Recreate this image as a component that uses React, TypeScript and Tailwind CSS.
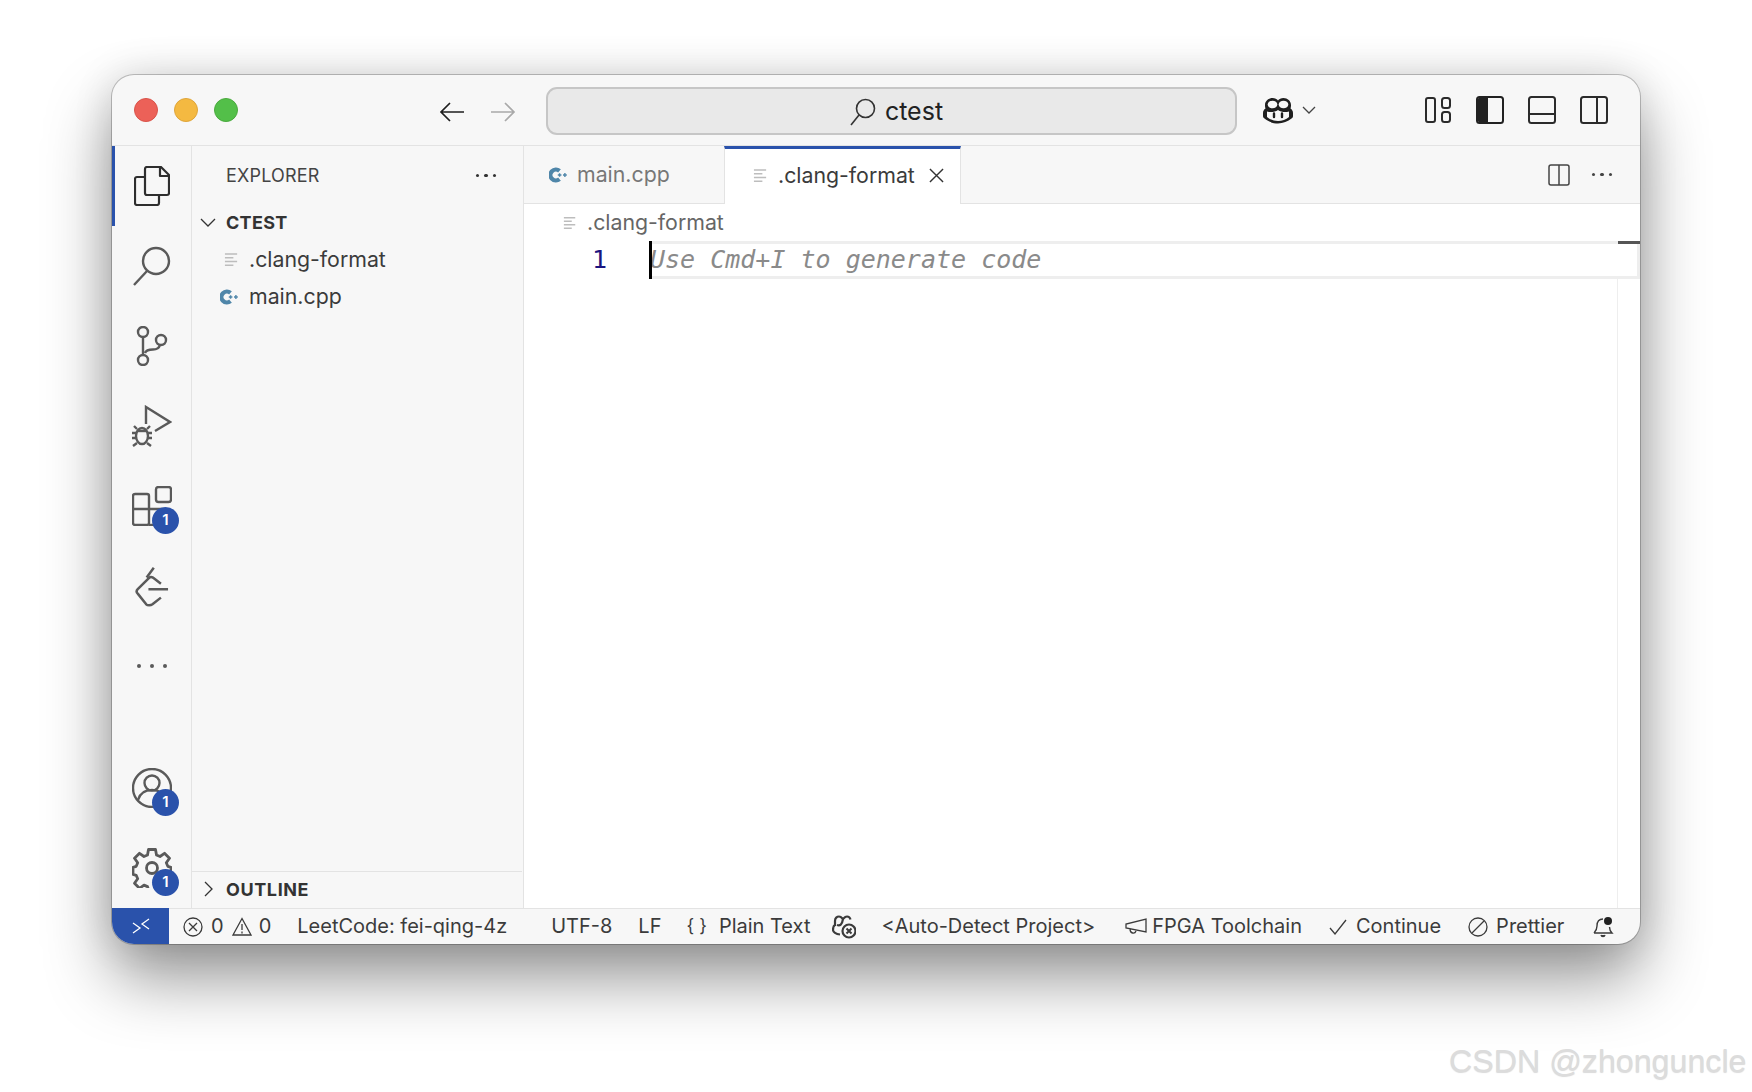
import React from 'react';

function FileLines({ className }: { className?: string }) {
  return (
    <svg viewBox="0 0 16 16" className={className} fill="none" stroke="#bdbdbd" strokeWidth="1.600">
      <path d="M1 2h13M1 6h9M1 10h13M1 14h9" />
    </svg>
  );
}

function CppIcon({ className }: { className?: string }) {
  return (
    <svg viewBox="0 0 18 16" className={className} fill="none" stroke="#4f86a9">
      <path d="M10.500 3.800A5.500 5.500 0 1 0 10.500 12.200" strokeWidth="4.200" />
      <path d="M8.800 8h3.600M10.600 6.200v3.600M14 8h3.800M15.900 6.100v3.800" strokeWidth="1.400" />
    </svg>
  );
}

function Badge({ className }: { className: string }) {
  return (
    <div className={`absolute flex h-[27px] w-[27px] items-center justify-center rounded-full bg-[#2a52ab] text-[15px] font-semibold text-white ${className}`}>
      1
    </div>
  );
}

function ActivityItem({ children, active }: { children: React.ReactNode; active?: boolean }) {
  return (
    <div className={`relative flex h-20 w-full items-center justify-center ${active ? 'border-l-[3px] border-[#2a52ab] pr-[3px]' : ''}`}>
      {children}
    </div>
  );
}

function CopilotIcon({ className }: { className?: string }) {
  return (
    <svg viewBox="0 0 32 27" className={className}>
      <path d="M1 16c0-2 1-3.500 2.500-4.500C3 10 3 9 3 8c0-4 3.500-7 7.500-7 2.500 0 4.500 1 5.500 2.500C17 2 19 1 21.500 1 25.500 1 29 4 29 8c0 1 0 2-.5 3.500C30 12.500 31 14 31 16v3c0 1-.5 2-1.500 2.600C26 24.600 21 26.500 16 26.500S6 24.600 2.500 21.600C1.500 21 1 20 1 19z" fill="#1f1f1f" />
      <ellipse cx="10.500" cy="7.500" rx="4.800" ry="3.800" fill="#f7f7f7" />
      <ellipse cx="21.500" cy="7.500" rx="4.800" ry="3.800" fill="#f7f7f7" />
      <path d="M5 14.500c4 1.200 8 .5 11-1.500 3 2 7 2.700 11 1.500V20c-3 2.500-7 4-11 4s-8-1.500-11-4z" fill="#f7f7f7" />
      <path d="M12 16.500v3.500M20 16.500v3.500" stroke="#1f1f1f" strokeWidth="2.400" strokeLinecap="round" />
    </svg>
  );
}

function CopilotSmall() {
  return (
    <g fill="none" stroke="#3b3b3b" strokeWidth="2.200">
      <path d="M3 11V6c0-3 2-4.500 4-4.500S10 3 11 4c1-1 2-2.500 4-2.500s3 1 3.500 3" />
      <path d="M3 10c-2 1-2 3-2 5 0 2 3 4 7 4.500" />
      <path d="M5 10c3 1 5 0 6-6" />
      <circle cx="17" cy="16" r="6.500" fill="#f7f7f7" />
      <path d="M14.500 13.500l5 5M19.500 13.500l-5 5" strokeWidth="2" />
    </g>
  );
}

function Dots({ dot, gap }: { dot: string; gap: string }) {
  return (
    <div className={`flex ${gap}`}>
      <div className={`rounded-full ${dot}`} />
      <div className={`rounded-full ${dot}`} />
      <div className={`rounded-full ${dot}`} />
    </div>
  );
}

function StatusText({ children, className = '' }: { children: React.ReactNode; className?: string }) {
  return <span className={`-mt-[2px] whitespace-nowrap ${className}`}>{children}</span>;
}

export default function App() {
  return (
    <div className="relative h-[1092px] w-[1752px] overflow-hidden bg-white pl-[112px] pt-[75px] font-['Inter','Liberation_Sans',sans-serif] text-[#3b3b3b]">
      {/* Window */}
      <div className="flex h-[869px] w-[1528px] flex-col overflow-hidden rounded-[22px] bg-[#f7f7f7] shadow-[0_0_0_1px_rgba(0,0,0,0.22),0_34px_66px_rgba(0,0,0,0.42),0_0_40px_rgba(0,0,0,0.12)]">
        {/* Title bar */}
        <header className="flex h-[71px] shrink-0 items-center border-b border-[#e3e3e3] pl-[22px] pr-[32px]">
          <div className="flex gap-4">
            <div className="h-6 w-6 rounded-full border border-[#d9534a] bg-[#ec6158]" />
            <div className="h-6 w-6 rounded-full border border-[#dfa53a] bg-[#f4b941]" />
            <div className="h-6 w-6 rounded-full border border-[#4aaa3e] bg-[#53bf49]" />
          </div>
          <svg viewBox="0 0 26 22" className="ml-[201px] mt-[3px] h-[22px] w-[26px]" fill="none" stroke="#1f1f1f" strokeWidth="1.700">
            <path d="M25 11H2M11 2l-9 9 9 9" />
          </svg>
          <svg viewBox="0 0 26 22" className="ml-[25px] mt-[3px] h-[22px] w-[26px]" fill="none" stroke="#a9a9a9" strokeWidth="1.700">
            <path d="M1 11h23M15 2l9 9-9 9" />
          </svg>
          <div className="ml-[30px] mt-px flex h-[48px] w-[691px] items-center justify-center rounded-[11px] border-2 border-[#c6c6c6] bg-[#e9e9e9] pl-[10px] pt-[2px]">
            <svg viewBox="0 0 26 28" className="h-[28px] w-[26px]" fill="none" stroke="#333333" strokeWidth="1.600">
              <circle cx="15.500" cy="10.500" r="9" />
              <path d="M9 17 1 27" />
            </svg>
            <span className="ml-[9px] text-[25px] leading-none text-[#222222]">ctest</span>
          </div>
          <CopilotIcon className="ml-[25px] h-[27px] w-[32px]" />
          <svg viewBox="0 0 14 8" className="ml-[8px] h-[8px] w-[14px]" fill="none" stroke="#444444" strokeWidth="1.300">
            <path d="M1 1l6 6 6-6" />
          </svg>
          <div className="ml-auto flex items-center gap-[24px]">
            <svg viewBox="0 0 28 26" className="h-[26px] w-[28px]" fill="none" stroke="#2b2b2b" strokeWidth="2">
              <rect x="2" y="1" width="9" height="24" rx="2" />
              <rect x="18" y="1" width="8" height="10" rx="2.500" />
              <rect x="18" y="15" width="8" height="10" rx="2.500" />
            </svg>
            <svg viewBox="0 0 28 28" className="h-[28px] w-[28px]">
              <rect x="1" y="1" width="26" height="26" rx="2.500" fill="none" stroke="#222222" strokeWidth="2" />
              <path d="M2 3a1 1 0 0 1 1-1h9v24H3a1 1 0 0 1-1-1z" fill="#222222" />
            </svg>
            <svg viewBox="0 0 28 28" className="h-[28px] w-[28px]" fill="none" stroke="#2b2b2b" strokeWidth="2">
              <rect x="1" y="1" width="26" height="26" rx="2.500" />
              <path d="M1 18h26" />
            </svg>
            <svg viewBox="0 0 28 28" className="h-[28px] w-[28px]" fill="none" stroke="#2b2b2b" strokeWidth="2">
              <rect x="1" y="1" width="26" height="26" rx="2.500" />
              <path d="M17 1v26" />
            </svg>
          </div>
        </header>

        {/* Body */}
        <div className="flex min-h-0 flex-1">
          {/* Activity bar */}
          <nav className="flex w-20 shrink-0 flex-col border-r border-[#e3e3e3]">
            <ActivityItem active>
              <svg viewBox="0 0 36 40" className="h-[40px] w-[36px]" fill="none" stroke="#2e2e2e" strokeWidth="2.200" strokeLinejoin="round">
                <path d="M11 3a2 2 0 0 1 2-2h14l8 8v18a2 2 0 0 1-2 2H13a2 2 0 0 1-2-2z" />
                <path d="M26 1v9h9" />
                <path d="M11 11H3a2 2 0 0 0-2 2v24a2 2 0 0 0 2 2h20a2 2 0 0 0 2-2v-8" />
              </svg>
            </ActivityItem>
            <ActivityItem>
              <svg viewBox="0 0 38 40" className="h-[40px] w-[38px]" fill="none" stroke="#5a5a5a" strokeWidth="2.400">
                <circle cx="23" cy="15" r="13" />
                <path d="M14 25 1 39" />
              </svg>
            </ActivityItem>
            <ActivityItem>
              <svg viewBox="0 0 32 40" className="h-[40px] w-[32px]" fill="none" stroke="#5a5a5a" strokeWidth="2.400">
                <circle cx="7" cy="6" r="5" />
                <circle cx="7" cy="34" r="5" />
                <circle cx="25" cy="14" r="5" />
                <path d="M7 11v18M9 27c1-3 4-3.500 8-3.500 3 0 6-1 7-4.500" />
              </svg>
            </ActivityItem>
            <ActivityItem>
              <svg viewBox="0 0 40 42" className="h-[42px] w-[40px]" fill="none" stroke="#5a5a5a" strokeWidth="2.400">
                <path d="M14 19V2l24 15-15 9" />
                <ellipse cx="10" cy="31" rx="6" ry="8" />
                <path d="M4 28H0M16 28h4M5 38l-4 3M15 38l4 3M4 33H0M16 33h4M5 24l-3-3M15 24l3-3" />
                <path d="M6 26h8" />
              </svg>
            </ActivityItem>
            <ActivityItem>
              <svg viewBox="0 0 40 40" className="h-[40px] w-[40px]" fill="none" stroke="#5a5a5a" strokeWidth="2.400">
                <rect x="1" y="8" width="16" height="31" rx="2" />
                <path d="M1 23h31v14a2 2 0 0 1-2 2H17" />
                <rect x="24" y="1" width="15" height="15" rx="2.500" />
              </svg>
              <Badge className="left-[40px] top-[41px]" />
            </ActivityItem>
            <ActivityItem>
              <svg viewBox="0 0 38 46" className="h-[41px] w-[34px]" fill="none" stroke="#5a5a5a" strokeWidth="2.800" strokeLinejoin="round">
                <path d="M15 26h22M21 2 13 13" />
                <path d="M29 20l-9-7c-1.500-1-3-1-4.500.5L3 26c-1.500 1.500-1.500 3.500 0 5l9.500 12c1.500 1.500 5 1.500 7 0l9.500-7.500" />
              </svg>
            </ActivityItem>
            <ActivityItem>
              <Dots dot="h-[4px] w-[4px] bg-[#5a5a5a]" gap="gap-[9px]" />
            </ActivityItem>
            <div className="flex-1" />
            <ActivityItem>
              <svg viewBox="0 0 40 40" className="h-[40px] w-[40px]" fill="none" stroke="#5a5a5a" strokeWidth="2.400">
                <circle cx="20" cy="20" r="19" />
                <circle cx="20" cy="15" r="7.500" />
                <path d="M6 32c2-7 7-10 14-10s12 3 14 10" />
              </svg>
              <Badge className="left-[40px] top-[41px]" />
            </ActivityItem>
            <ActivityItem>
              <svg viewBox="0 0 40 40" className="h-[40px] w-[40px]" fill="none" stroke="#5a5a5a" strokeWidth="2.800" strokeLinejoin="round">
                <path d="M16.500 1.500h7l1 5.500 3.500 1.500 4.500-3.200 5 5-3.200 4.500 1.500 3.500 3.200 1v7l-3.200 1-1.500 3.500 3.200 4.500-5 5-4.500-3.200-3.500 1.500-1 3.200h-7l-1-3.200-3.500-1.500-4.500 3.200-5-5 3.200-4.500-1.500-3.500-3.200-1v-7l3.200-1 1.500-3.500-3.200-4.500 5-5 4.500 3.200 3.500-1.500z" />
                <circle cx="20" cy="20" r="5.500" />
              </svg>
              <Badge className="left-[40px] top-[41px]" />
            </ActivityItem>
          </nav>

          {/* Explorer */}
          <aside className="flex w-[332px] shrink-0 flex-col border-r border-[#e3e3e3]">
            <div className="flex h-[58px] shrink-0 items-center justify-between pl-[34px] pr-[27px] pt-[1px] text-[18px] tracking-[0.2px] text-[#444444]">
              <span>EXPLORER</span>
              <Dots dot="h-[3.500px] w-[3.500px] bg-[#333333]" gap="gap-[5px]" />
            </div>
            <div className="flex h-[37px] items-center pl-[8px] text-[18px] font-bold tracking-[0.3px] text-[#333333]">
              <svg viewBox="0 0 16 10" className="h-[10px] w-[16px]" fill="none" stroke="#333333" strokeWidth="1.300">
                <path d="M1 1l7 7 7-7" />
              </svg>
              <span className="ml-[10px]">CTEST</span>
            </div>
            <div className="flex h-[37px] items-center pl-[32px] text-[21.3px] text-[#3b3b3b]">
              <FileLines className="h-[15px] w-[15px]" />
              <span className="ml-[10px]">.clang-format</span>
            </div>
            <div className="flex h-[37px] items-center pl-[28px] text-[21.3px] text-[#3b3b3b]">
              <CppIcon className="h-[16px] w-[18px]" />
              <span className="ml-[11px]">main.cpp</span>
            </div>
            <div className="flex-1" />
            <div className="mr-[1px] flex h-[37px] shrink-0 items-center border-t border-[#e3e3e3] pb-[2px] pl-[12px] text-[18px] font-bold tracking-[0.6px] text-[#333333]">
              <svg viewBox="0 0 10 16" className="h-[16px] w-[10px]" fill="none" stroke="#333333" strokeWidth="1.300">
                <path d="M1 1l7 7-7 7" />
              </svg>
              <span className="ml-[12px]">OUTLINE</span>
            </div>
          </aside>

          {/* Editor */}
          <main className="flex min-w-0 flex-1 flex-col bg-white">
            <div className="flex h-[58px] shrink-0 items-stretch border-b border-[#e3e3e3] bg-[#f7f7f7]">
              <div className="flex w-[200px] shrink-0 items-center pl-[25px] text-[21.3px] text-[#777777]">
                <CppIcon className="h-[16px] w-[18px]" />
                <span className="ml-[10px]">main.cpp</span>
              </div>
              <div className="-mb-px flex w-[237px] shrink-0 items-center whitespace-nowrap border-x border-t-[3px] border-x-[#e3e3e3] border-t-[#2a52ab] bg-white pb-[2px] pl-[28px] text-[21.3px] text-[#3b3b3b]">
                <FileLines className="h-[15px] w-[15px]" />
                <span className="ml-[10px]">.clang-format</span>
                <svg viewBox="0 0 16 16" className="ml-[14px] h-[15px] w-[15px]" fill="none" stroke="#333333" strokeWidth="1.500">
                  <path d="M1 1l14 14M15 1 1 15" />
                </svg>
              </div>
              <div className="ml-auto flex items-center pr-[28px]">
                <svg viewBox="0 0 22 22" className="-ml-px h-[22px] w-[22px]" fill="none" stroke="#444444" strokeWidth="1.500">
                  <rect x="1" y="1" width="20" height="20" rx="2" />
                  <path d="M11 1v20" />
                </svg>
                <div className="ml-[22px]">
                  <Dots dot="h-[3.500px] w-[3.500px] bg-[#444444]" gap="gap-[5px]" />
                </div>
              </div>
            </div>
            <div className="flex h-[37px] shrink-0 items-center pl-[39px] text-[21.3px] text-[#666666]">
              <FileLines className="h-[14px] w-[14px]" />
              <span className="ml-[10px]">.clang-format</span>
            </div>
            <div className="flex h-[38px] shrink-0 items-center">
              <span className="ml-[68px] w-[57px] font-['DejaVu_Sans_Mono',monospace] text-[25px] text-[#1b1480]">1</span>
              <div className="relative flex h-full flex-1 items-center border-[3px] border-[#eeeeee] pb-[2px]">
                <div className="absolute -left-[3px] -top-[3px] h-[38px] w-[3px] bg-black" />
                <span className="-ml-[2px] font-['DejaVu_Sans_Mono',monospace] text-[25px] italic leading-none text-[#8a8a8a]">
                  Use Cmd+I to generate code
                </span>
                <div className="absolute -right-[3px] -top-[3px] h-[3px] w-[22px] bg-[#555555]" />
              </div>
            </div>
            <div className="flex flex-1 justify-end">
              <div className="w-[23px] border-l border-[#eeeeee]" />
            </div>
          </main>
        </div>

        {/* Status bar */}
        <footer className="flex h-[36px] shrink-0 items-center border-t border-[#e3e3e3] text-[20px] text-[#3b3b3b]">
          <div className="-mt-px flex h-[36px] w-[57px] items-center justify-center bg-[#2a52ab]">
            <svg viewBox="0 0 18 18" className="h-[18px] w-[18px]" fill="none" stroke="#ffffff" strokeWidth="1.300">
              <path d="M1 16l7-5-7-5M17 2l-7 5 7 5" />
            </svg>
          </div>
          <svg viewBox="0 0 20 20" className="ml-[14px] h-[20px] w-[20px]" fill="none" stroke="#3b3b3b" strokeWidth="1.300">
            <circle cx="10" cy="10" r="9" />
            <path d="M6 6l8 8M14 6l-8 8" />
          </svg>
          <StatusText className="ml-[8px]">0</StatusText>
          <svg viewBox="0 0 20 19" className="ml-[8px] h-[19px] w-[20px]" fill="none" stroke="#3b3b3b" strokeWidth="1.300">
            <path d="M10 1.500 19 18H1zM10 7v6M10 14.500v2" />
          </svg>
          <StatusText className="ml-[7px]">0</StatusText>
          <StatusText className="ml-[26px]">LeetCode: fei-qing-4z</StatusText>
          <StatusText className="ml-[44px]">UTF-8</StatusText>
          <StatusText className="ml-[26px]">LF</StatusText>
          <StatusText className="ml-[25px] text-[18px]">{'{ }'}</StatusText>
          <StatusText className="ml-[12px]">Plain Text</StatusText>
          <svg viewBox="0 0 24 24" className="ml-[22px] h-[24px] w-[24px]">
            <CopilotSmall />
          </svg>
          <StatusText className="ml-[25px]">{'<Auto-Detect Project>'}</StatusText>
          <svg viewBox="0 0 22 18" className="ml-[30px] h-[18px] w-[22px]" fill="none" stroke="#3b3b3b" strokeWidth="1.300">
            <path d="M21 1v13L1 10V6zM5 11c0 5 5 5 6 2" />
          </svg>
          <StatusText className="ml-[5px]">FPGA Toolchain</StatusText>
          <svg viewBox="0 0 18 16" className="ml-[27px] h-[16px] w-[18px]" fill="none" stroke="#3b3b3b" strokeWidth="1.300">
            <path d="M1 9l5 6L17 1" />
          </svg>
          <StatusText className="ml-[9px]">Continue</StatusText>
          <svg viewBox="0 0 20 20" className="ml-[27px] h-[20px] w-[20px]" fill="none" stroke="#3b3b3b" strokeWidth="1.300">
            <circle cx="10" cy="10" r="9" />
            <path d="M4 16 16 4" />
          </svg>
          <StatusText className="ml-[8px]">Prettier</StatusText>
          <svg viewBox="0 0 22 22" className="ml-[29px] h-[22px] w-[22px]" fill="none" stroke="#3b3b3b" strokeWidth="1.400">
            <path d="M1 17h18c-2-2-2.500-3-2.500-6M1 17c2-2 3-3 3-7s2-7 6-7" />
            <path d="M8 19c.5 2 3.500 2 4 0" fill="#3b3b3b" />
            <circle cx="15" cy="5" r="4" fill="#222222" stroke="none" />
          </svg>
        </footer>
      </div>

      {/* CSDN watermark */}
      <div className="absolute left-[1449px] top-[1045px] whitespace-nowrap font-['Liberation_Sans',sans-serif] text-[32.200px] leading-none text-[#dcdcdc] [text-shadow:0_1px_1px_rgba(0,0,0,0.15)]">
        CSDN @zhonguncle
      </div>
    </div>
  );
}
